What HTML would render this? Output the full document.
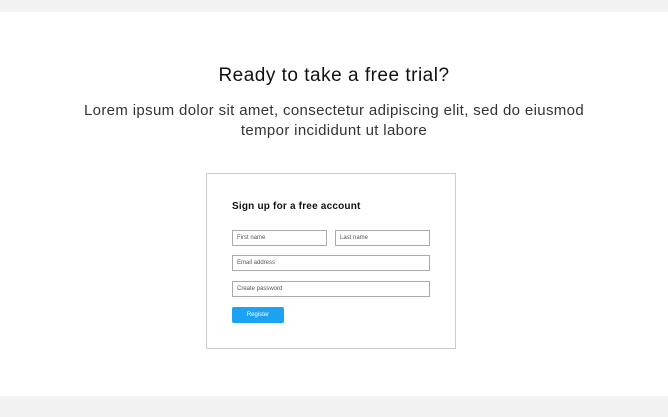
<!DOCTYPE html>
<html><head><style>
*{margin:0;padding:0;box-sizing:border-box}
body{width:668px;height:417px;background:#f2f2f2;font-family:"Liberation Sans",sans-serif;position:relative;overflow:hidden}
.panel{position:absolute;left:0;top:12px;width:668px;height:384px;background:#fff}
h1{position:absolute;top:65px;left:0;width:668px;text-align:center;font-weight:400;font-size:19px;letter-spacing:0.5px;color:#111}
p.lead{position:absolute;top:101px;left:64px;width:540px;text-align:center;font-size:15px;line-height:20px;letter-spacing:0.35px;color:#333}
.card{position:absolute;left:206px;top:173px;width:250px;height:176px;border:1px solid #ccc;background:#fff}
.card h2{position:absolute;left:25px;top:27px;font-size:10px;font-weight:700;letter-spacing:0.2px;color:#111}
.in{position:absolute;height:16px;border:1px solid #aaa;color:#555;padding-left:4px}
.in span,.btn span{position:absolute;top:4px;font-size:6px;line-height:7px}
.btn{position:absolute;left:25px;top:133px;width:52px;height:16px;background:#1da1f2;border-radius:2px;color:#fff;text-align:center}
.btn span{left:0;right:0;top:5px}
</style></head><body>
<div class="panel"></div>
<h1>Ready to take a free trial?</h1>
<p class="lead">Lorem ipsum dolor sit amet, consectetur adipiscing elit, sed do eiusmod tempor incididunt ut labore</p>
<div class="card">
<h2>Sign up for a free account</h2>
<div class="in" style="left:25px;top:56px;width:95px"><span>First name</span></div>
<div class="in" style="left:128px;top:56px;width:95px"><span>Last name</span></div>
<div class="in" style="left:25px;top:81px;width:198px"><span>Email address</span></div>
<div class="in" style="left:25px;top:107px;width:198px"><span>Create password</span></div>
<div class="btn"><span>Register</span></div>
</div>
</body></html>
